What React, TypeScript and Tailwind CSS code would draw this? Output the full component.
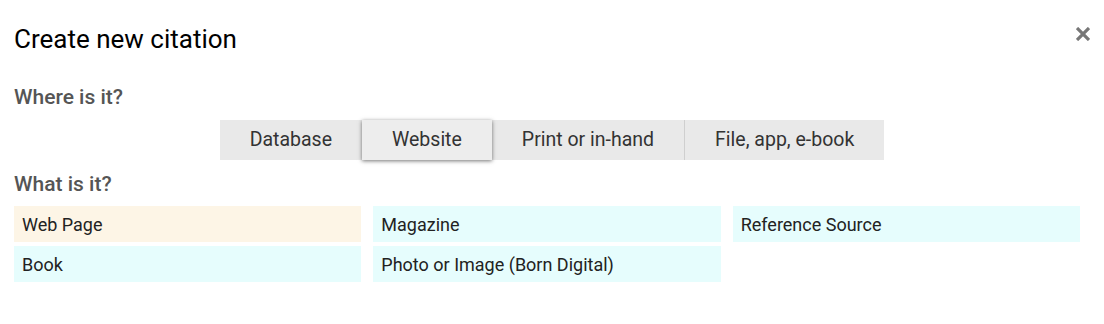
import React from "react";

const locations = ["Database", "Website", "Print or in-hand", "File, app, e-book"];

const types = [
  { label: "Web Page", selected: true },
  { label: "Magazine" },
  { label: "Reference Source" },
  { label: "Book" },
  { label: "Photo or Image (Born Digital)" },
];

export default function App() {
  const active = "Website";

  return (
    <div className="w-[1104px] h-[324px] bg-white px-[14px] font-['Roboto',sans-serif]">
      {/* Header */}
      <div className="flex items-start justify-between pt-[23px]">
        <h1 className="text-[26px] leading-[32px] text-black">Create new citation</h1>
        <button className="mt-[4px] flex text-[#777]" aria-label="Close">
          <svg width="14" height="14" viewBox="0 0 14 14">
            <path d="M1 1 L13 13 M13 1 L1 13" stroke="currentColor" strokeWidth="3.2" />
          </svg>
        </button>
      </div>

      {/* Where */}
      <h2 className="mt-[30px] text-[21px] leading-[24px] font-medium text-[#555]">Where is it?</h2>
      <div className="mt-[11px] flex justify-center">
        <div className="flex h-[40px] bg-[#e9e9e9]">
          {locations.map((loc, i) => (
            <button
              key={loc}
              className={
                loc === active
                  ? "relative z-10 px-[30px] text-[19.5px] text-[#333] bg-[#ededed] shadow-[0_1px_4px_rgba(0,0,0,0.55)]"
                  : i === 3
                  ? "px-[30px] text-[19.5px] text-[#333] border-l border-[#cfcfcf]"
                  : "px-[30px] text-[19.5px] text-[#333]"
              }
            >
              {loc}
            </button>
          ))}
        </div>
      </div>

      {/* What */}
      <h2 className="mt-[12px] text-[21px] leading-[24px] font-medium text-[#555]">What is it?</h2>
      <div className="mt-[10px] w-[1066px] grid grid-cols-3 gap-x-[12px] gap-y-[4px]">
        {types.map((t) => (
          <div
            key={t.label}
            className={`h-[36px] flex items-center px-[8px] text-[18px] text-[#222] ${
              t.selected ? "bg-[#fdf5e6]" : "bg-[#e6fdfd]"
            }`}
          >
            {t.label}
          </div>
        ))}
      </div>
    </div>
  );
}
